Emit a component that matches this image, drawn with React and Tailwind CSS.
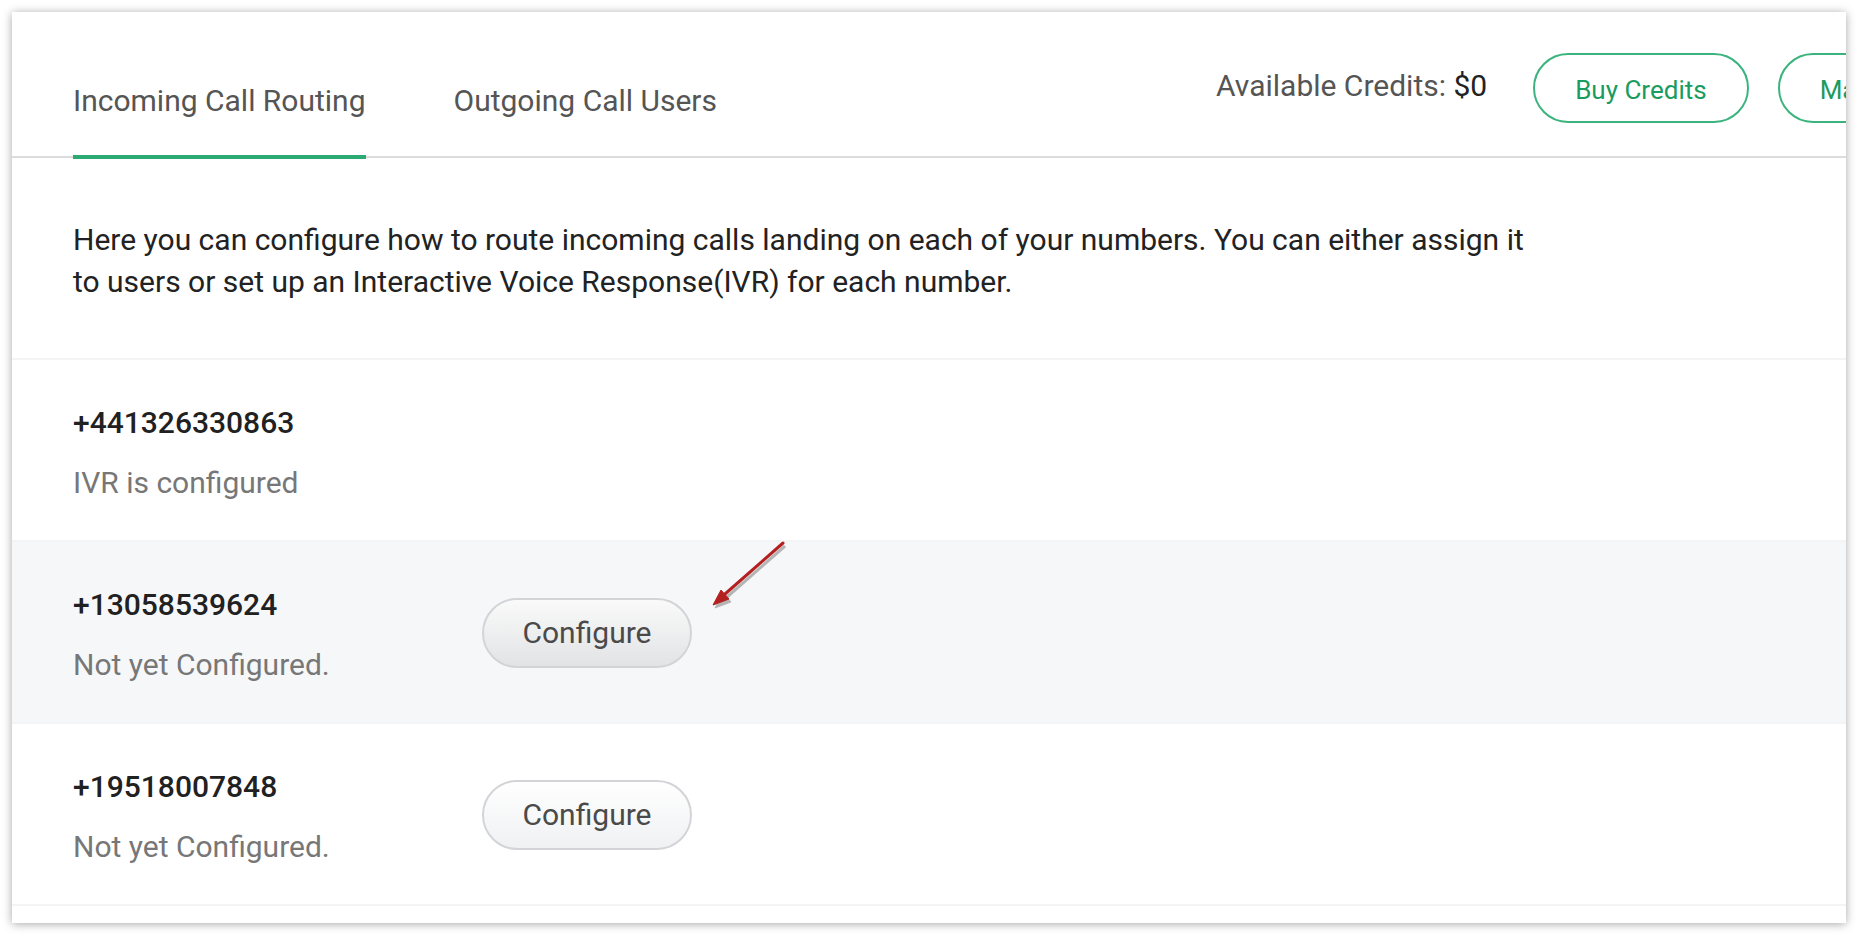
import React from "react";

const numbers = [
  { phone: "+441326330863", status: "IVR is configured", configured: true },
  { phone: "+13058539624", status: "Not yet Configured.", hover: true },
  { phone: "+19518007848", status: "Not yet Configured." },
];

function Arrow() {
  // red callout arrow pointing at the Configure button
  return (
    <svg
      className="absolute left-[688px] top-[523px]"
      width="100"
      height="90"
      viewBox="0 0 100 90"
    >
      <g transform="translate(2 3)" fill="#9a9a9a" stroke="#9a9a9a" opacity="0.7">
        <line x1="83" y1="8" x2="25" y2="59" strokeWidth="3" />
        <polygon points="13,70 29,64 21,55" />
      </g>
      <g fill="#b3201f" stroke="#b3201f">
        <line x1="83" y1="8" x2="25" y2="59" strokeWidth="3" strokeLinecap="round" />
        <polygon points="13,70 29,64 21,55" strokeWidth="1" />
      </g>
    </svg>
  );
}

export default function App() {
  return (
    <div className="min-h-screen bg-white p-[12px] font-['Roboto','Liberation_Sans',sans-serif]">
      <div className="relative w-[1834px] h-[911px] overflow-hidden bg-white shadow-[0_1px_9px_rgba(0,0,0,0.35)]">
        {/* header with tabs */}
        <div className="flex h-[146px] border-b-2 border-[#dcdcdc] pl-[61px]">
          <div className="flex w-[1143px] shrink-0 gap-[88px]">
            <div className="h-[147px] border-b-4 border-[#2baa74] flex items-center pt-[34px] text-[30px] text-[#555555]">
              Incoming Call Routing
            </div>
            <div className="h-[147px] border-b-4 border-transparent flex items-center pt-[34px] text-[30px] text-[#555555]">
              Outgoing Call Users
            </div>
          </div>
          <div className="flex shrink-0 items-center pt-[8px]">
            <span className="mb-[5px] text-[30px] text-[#555555] whitespace-nowrap">
              Available Credits: <span className="text-[#222222]">$0</span>
            </span>
            <button className="ml-[46px] h-[70px] px-[40px] pt-[4px] rounded-full border-2 border-[#3bb37e] text-[26px] text-[#1a9b5f] whitespace-nowrap">
              Buy Credits
            </button>
            <button className="ml-[29px] h-[70px] px-[40px] pt-[4px] rounded-full border-2 border-[#3bb37e] text-[26px] text-[#1a9b5f] whitespace-nowrap">
              Manage Numbers
            </button>
          </div>
        </div>

        {/* description */}
        <div className="px-[61px] pt-[61px] pb-[55px] border-b-2 border-[#f3f4f6]">
          <p className="text-[30px] leading-[42px] text-[#222222] whitespace-nowrap">
            Here you can configure how to route incoming calls landing on each of your numbers. You can either assign it
            <br />
            to users or set up an Interactive Voice Response(IVR) for each number.
          </p>
        </div>

        {/* numbers */}
        {numbers.map((n) => (
          <div
            key={n.phone}
            className={`flex items-center px-[61px] pt-[43px] pb-[37px] border-b-2 border-[#f3f4f6] ${
              n.hover ? "bg-[#f6f7f9]" : "bg-white"
            }`}
          >
            <div className="w-[409px] shrink-0 flex flex-col gap-[20px]">
              <div className="text-[30px] leading-[40px] font-medium text-[#212121]">{n.phone}</div>
              <div className="text-[30px] leading-[40px] text-[#777777]">{n.status}</div>
            </div>
            {!n.configured && (
              <button
                className={`mb-[5px] w-[210px] h-[70px] rounded-full border-2 border-[#d3d4d7] text-[30px] text-[#4a4a4a] bg-linear-to-b ${
                  n.hover ? "from-[#fafafa] to-[#e2e3e5]" : "from-white to-[#f0f1f3]"
                }`}
              >
                Configure
              </button>
            )}
          </div>
        ))}

        <Arrow />
      </div>
    </div>
  );
}
